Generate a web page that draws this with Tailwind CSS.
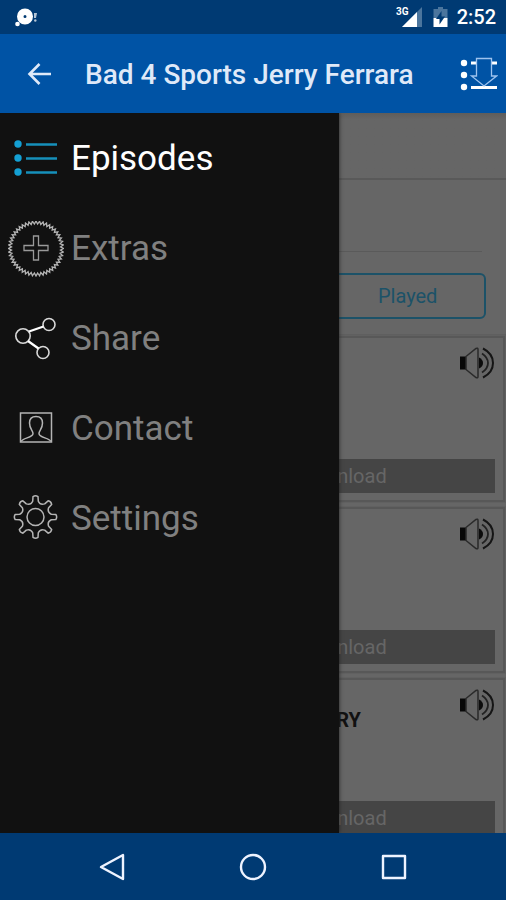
<!DOCTYPE html>
<html lang="en">
<head>
<meta charset="utf-8">
<meta name="viewport" content="width=device-width, initial-scale=1">
<title>Bad 4 Sports Jerry Ferrara</title>
<script src="https://cdn.jsdelivr.net/npm/@tailwindcss/browser@4"></script>
</head>
<body class="font-[Roboto,sans-serif]">
<svg class="hidden" aria-hidden="true">
  <symbol id="speaker" viewBox="0 0 36 34">
    <path d="M1 10.500h6v13H1z" fill="#080808"/>
    <path d="M7 10.500L17 2.500q2-1 2 1v27q0 2-2 1L7 23.500z" fill="none" stroke="#2a2a2a" stroke-width="1.500"/>
    <path d="M20 11.500q4 2 4 5.500t-4 5.500z" fill="#0c0c0c"/>
    <path d="M23 7.500q6 4 6 9.500t-6 9.500" fill="none" stroke="#222" stroke-width="1.800"/>
    <path d="M24 2.500q10 5 10 14.500t-10 14.500" fill="none" stroke="#151515" stroke-width="2"/>
  </symbol>
</svg>
<div class="flex h-screen flex-col overflow-hidden bg-[#666]">
  <div class="flex h-[34px] shrink-0 items-center bg-[#003a73] pr-[10px] pl-[14px] text-white">
    <svg class="h-6 w-6" viewBox="0 0 24 24" fill="#fff" aria-hidden="true">
      <path fill-rule="evenodd" d="M11 3.500a8 8 0 1 0 0 16a8 8 0 1 0 0-16zM11 10a1.500 1.500 0 1 1 0 3a1.500 1.500 0 1 1 0-3z"/>
      <circle cx="3.500" cy="19" r="2.300"/><path d="M20 8h3l-1 5h-2z" opacity=".7"/><circle cx="21.300" cy="15.500" r="1.200" opacity=".7"/>
    </svg>
    <div class="ml-auto flex items-center">
      <span class="mb-[10px] text-[10px] leading-3 font-bold">3G</span>
      <svg class="-ml-2 h-5 w-[22px]" viewBox="0 0 22 20" aria-hidden="true">
        <path d="M1 20L21 0v20z" fill="#4b759d"/><path d="M1 20L16 5v15z" fill="#fff"/>
      </svg>
      <svg class="ml-[10px] h-5 w-[15px]" viewBox="0 0 15 20" aria-hidden="true">
        <path d="M5 0h5v2h4.500v9H.5V2H5z" fill="#4b759d"/><path d="M.5 11h14v9H.5z" fill="#fff"/>
        <path d="M8.500 4v5.500H12L6.500 17.500V12H3z" fill="#003a73"/>
      </svg>
      <span class="ml-[9px] text-[20px] leading-6 font-medium">2:52</span>
    </div>
  </div>

  <header class="flex h-[79px] shrink-0 items-center bg-[#0053a5] pr-2 pl-[26px]">
    <button aria-label="Back" class="flex w-[59px] shrink-0 justify-start">
      <svg class="h-6 w-[26px]" viewBox="0 0 26 24" fill="none" stroke="#dfe9f8" stroke-width="2.600" aria-hidden="true"><path d="M25 12H3.500M13.500 2L3.500 12L13.500 22"/></svg>
    </button>
    <h1 class="flex-1 pt-0.5 text-[28px] leading-8 font-medium whitespace-nowrap text-[#dfe9f8]">Bad 4 Sports Jerry Ferrara</h1>
    <button aria-label="Downloads">
      <svg class="h-[34px] w-[38px]" viewBox="0 0 38 34" fill="none" aria-hidden="true">
        <g fill="#fff"><circle cx="4" cy="6" r="3.200"/><circle cx="4" cy="18" r="3.200"/><circle cx="4" cy="30" r="3.200"/></g>
        <path d="M11 6h6M31 6h6M11 30.500h26" stroke="#fff" stroke-width="3"/>
        <path d="M16.500 1.500h15v17.500h5L24 29L11.500 19h5z" fill="#0053a5" stroke="#9ec3ee" stroke-width="1.300"/>
      </svg>
    </button>
  </header>

  <main class="relative flex-1 overflow-hidden bg-[#666]">
    <div class="h-[67px] border-b-2 border-[#595959] bg-linear-to-b from-[#5f5d5b] to-[#666] to-10%"></div>
    <div class="pr-6 pl-[22px] pt-6">
      <input type="search" aria-label="Search episodes" class="block h-12 w-full border-b border-[#5a5a5a] bg-transparent">
    </div>
    <div class="mt-[21px] mr-5 ml-6 grid h-[46px] grid-cols-3 divide-x-2 divide-[#1c5268] overflow-hidden rounded-md border-2 border-[#1c5268] text-[20px] leading-6 text-[#1c5268]">
      <button>All</button>
      <button>New</button>
      <button>Played</button>
    </div>
    <div class="mt-[15px] flex flex-col gap-[5px] border-t-2 border-[#5f5f5f]">
      <article class="mr-px flex h-[166px] flex-col items-end justify-between border-2 border-[#585858] pt-2 pr-2 pb-[7px] shadow-[0_0_0_1px_#616161]">
        <svg class="h-[34px] w-9" aria-hidden="true"><use href="#speaker"/></svg>
        <button class="h-[34px] w-[62%] bg-[#454545] text-[20px] leading-6 text-[#666]">Download</button>
      </article>
      <article class="mr-px flex h-[166px] flex-col items-end justify-between border-2 border-[#585858] pt-2 pr-2 pb-[7px] shadow-[0_0_0_1px_#616161]">
        <svg class="h-[34px] w-9" aria-hidden="true"><use href="#speaker"/></svg>
        <button class="h-[34px] w-[62%] bg-[#454545] text-[20px] leading-6 text-[#666]">Download</button>
      </article>
      <article class="mr-px flex h-[166px] flex-col items-end justify-between border-2 border-[#585858] pt-2 pr-2 pb-[7px] shadow-[0_0_0_1px_#616161]">
        <div class="flex items-start">
          <h2 class="mt-5 mr-[98px] text-[20px] leading-6 font-bold text-[#111]">JERRY</h2>
          <svg class="h-[34px] w-9" aria-hidden="true"><use href="#speaker"/></svg>
        </div>
        <button class="h-[34px] w-[62%] bg-[#454545] text-[20px] leading-6 text-[#666]">Download</button>
      </article>
    </div>

    <nav aria-label="Menu" class="absolute inset-y-0 left-0 w-[67%] bg-[#111] pt-px text-[35px] leading-10 text-[#808080] shadow-[0_0_4px_#222]">
      <a href="#" class="flex h-[90px] items-center gap-[7px] pl-2 text-white">
        <svg class="h-14 w-14" viewBox="0 0 56 56" aria-hidden="true">
          <g fill="#14a0d4"><circle cx="10" cy="13" r="3.700"/><circle cx="10" cy="27" r="3.700"/><circle cx="10" cy="41" r="3.700"/></g>
          <path d="M18 13.500h31M18 27.500h31M18 41.500h31" stroke="#1690bb" stroke-width="2.600"/>
        </svg>Episodes</a>
      <a href="#" class="flex h-[90px] items-center gap-[7px] pl-2">
        <svg class="h-14 w-14" viewBox="0 0 56 56" fill="none" stroke="#b4b4b4" stroke-width="1.300" aria-hidden="true">
          <path id="burst"/>
          <path d="M25.500 15h5v9.500H40v5h-9.500V39h-5v-9.500H16v-5h9.500z" stroke="#999"/>
        </svg>Extras</a>
      <a href="#" class="flex h-[90px] items-center gap-[7px] pl-2">
        <svg class="h-14 w-14" viewBox="0 0 56 56" fill="none" stroke="#d8d8d8" stroke-width="1.600" aria-hidden="true">
          <circle cx="15" cy="25" r="7.200"/><circle cx="41" cy="13.500" r="6"/><circle cx="35" cy="41.500" r="6"/>
          <path d="M21 20.500L35.500 15.500M20 30l10.500 7.500" stroke="#fff" stroke-width="2.200"/>
        </svg>Share</a>
      <a href="#" class="flex h-[90px] items-center gap-[7px] pl-2">
        <svg class="h-14 w-14" viewBox="0 0 56 56" fill="none" stroke="#b4b4b4" stroke-width="1.500" aria-hidden="true">
          <path d="M12.500 12h31v29h-31z"/>
          <path d="M13 40.500C15 36.500 25 37 25 32.500C25 29.500 21.500 28 21.500 22C21.500 17.500 24 15.500 28 15.500S34.500 17.500 34.500 22C34.500 28 31 29.500 31 32.500C31 37 41 36.500 43 40.500"/>
        </svg>Contact</a>
      <a href="#" class="flex h-[90px] items-center gap-[7px] pl-2">
        <svg class="h-14 w-14" viewBox="0 0 56 56" fill="none" stroke="#b4b4b4" stroke-width="1.500" stroke-linejoin="round" aria-hidden="true">
          <circle cx="27.500" cy="26" r="8.500"/><path id="gear"/>
        </svg>Settings</a>
    </nav>
  </main>

  <footer class="flex h-[67px] shrink-0 items-center justify-center gap-[113px] bg-[#003a73]">
    <button aria-label="System back"><svg class="h-7 w-7" viewBox="0 0 28 28" fill="none" stroke="#eef3ff" stroke-width="2.400" stroke-linejoin="round" aria-hidden="true"><path d="M25 2v24L3 14z"/></svg></button>
    <button aria-label="Home"><svg class="h-7 w-7" viewBox="0 0 28 28" fill="none" stroke="#eef3ff" stroke-width="2.400" aria-hidden="true"><circle cx="14" cy="14" r="12"/></svg></button>
    <button aria-label="Recent apps"><svg class="h-7 w-7" viewBox="0 0 28 28" fill="none" stroke="#eef3ff" stroke-width="2.400" stroke-linejoin="round" aria-hidden="true"><path d="M3 3h22v22H3z"/></svg></button>
  </footer>
</div>
<script>
  // Serrated ring around the plus sign
  let ring = '';
  for (let i = 0; i < 96; i++) {
    const a = i * Math.PI / 48, r = i % 2 ? 24.5 : 27.5;
    ring += (i ? 'L' : 'M') + (28 + r * Math.cos(a)).toFixed(2) + ' ' + (27.5 + r * Math.sin(a)).toFixed(2);
  }
  document.getElementById('burst').setAttribute('d', ring + 'Z');

  // Eight-toothed gear outline
  let gear = '';
  const pt = (deg, r) => (27.5 + r * Math.cos(deg * Math.PI / 180)).toFixed(2) + ' ' + (26 + r * Math.sin(deg * Math.PI / 180)).toFixed(2);
  for (let i = 0; i < 8; i++) {
    const a = i * 45;
    gear += (i ? 'L' : 'M') + pt(a - 10, 16) + 'L' + pt(a - 7, 20.5) + 'Q' + pt(a, 22) + ' ' + pt(a + 7, 20.5) + 'L' + pt(a + 10, 16) + 'Q' + pt(a + 22.5, 12.5) + ' ' + pt(a + 35, 16);
  }
  document.getElementById('gear').setAttribute('d', gear + 'Z');
</script>
</body>
</html>
